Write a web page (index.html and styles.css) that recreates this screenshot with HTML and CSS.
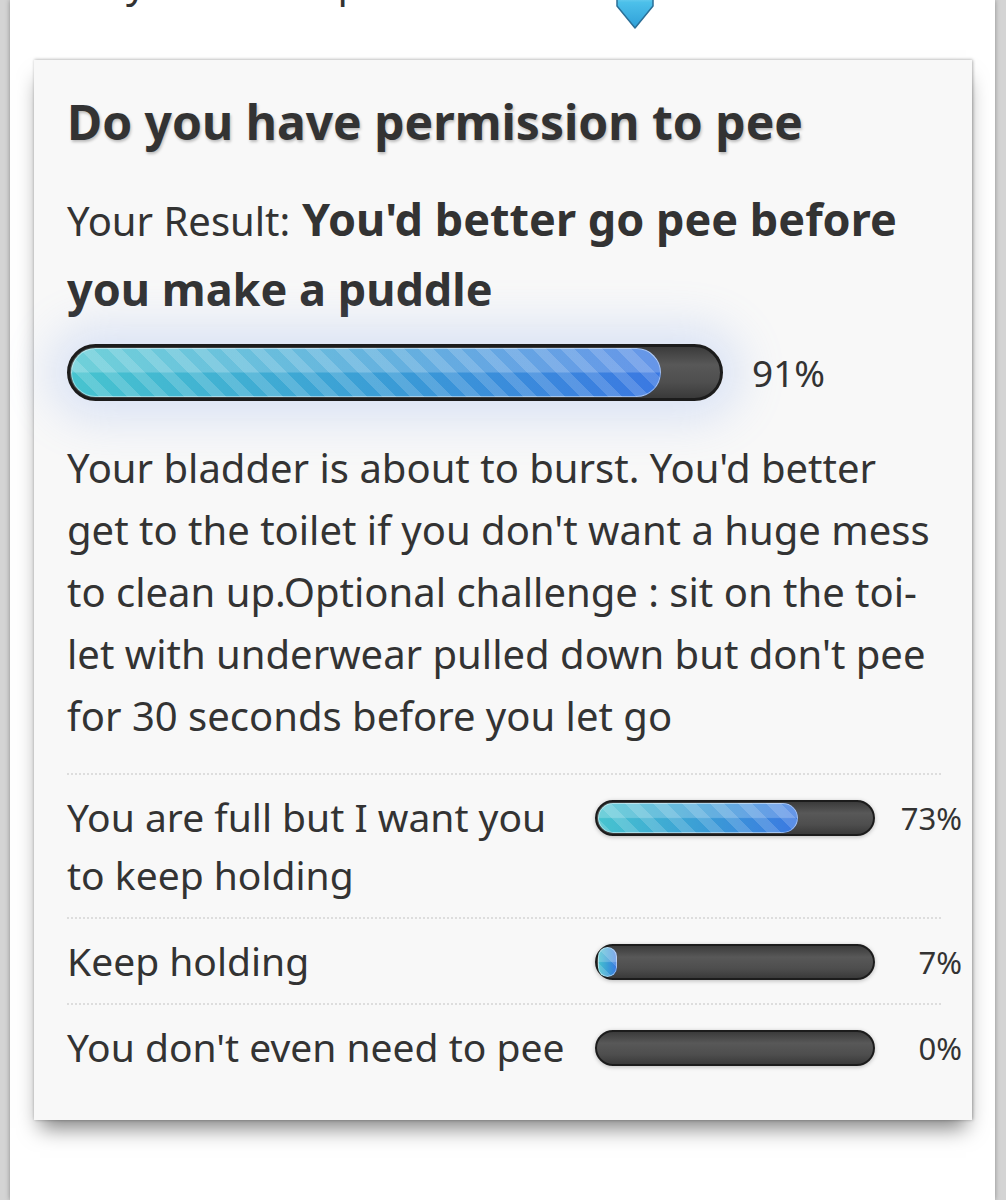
FILE: index.html
```html
<!DOCTYPE html>
<html lang="en">
<head>
    <meta charset="UTF-8">
    <title>Do you have permission to pee</title>
    <meta name="viewport" content="width=device-width, initial-scale=1.0">
    <link rel="stylesheet" href="styles.css">
</head>
<body>
    <div class="page">
        <div class="intro">
            <span class="intro-text">you stack up to the rest</span>
            <svg class="intro-arrow" width="44" height="32" viewBox="0 0 44 32">
                <defs>
                    <linearGradient id="arrowGrad" x1="0" y1="0" x2="0" y2="1">
                        <stop offset="0" stop-color="#8ddcf4"/>
                        <stop offset="0.25" stop-color="#4cc0ea"/>
                        <stop offset="1" stop-color="#2f9fd8"/>
                    </linearGradient>
                </defs>
                <path d="M4 -4 L4 8 L22 30 L40 8 L40 -4 Z" fill="url(#arrowGrad)" stroke="#2b6f97" stroke-width="1.5" stroke-linejoin="round"/>
            </svg>
        </div>

        <div class="card">
            <h1 class="quiz-title">Do you have permission to pee</h1>
            <p class="result"><span class="result-label">Your Result:</span> <strong>You'd better go pee before you make a puddle</strong></p>

            <div class="main-score">
                <div class="bar bar-main"><div class="fill" style="width:91%"></div></div>
                <span class="pct-main">91%</span>
            </div>

            <p class="desc">Your bladder is about to burst. You'd better get to the toilet if you don't want a huge mess to clean up.Optional challenge : sit on the toi&shy;let with underwear pulled down but don't pee for 30 seconds before you let go</p>

            <ul class="others">
                <li class="other">
                    <span class="other-label">You are full but I want you to keep holding</span>
                    <div class="bar bar-small"><div class="fill" style="width:73%"></div></div>
                    <span class="pct">73%</span>
                </li>
                <li class="other">
                    <span class="other-label">Keep holding</span>
                    <div class="bar bar-small"><div class="fill" style="width:7%"></div></div>
                    <span class="pct">7%</span>
                </li>
                <li class="other">
                    <span class="other-label">You don't even need to pee</span>
                    <div class="bar bar-small"><div class="fill" style="width:0%"></div></div>
                    <span class="pct">0%</span>
                </li>
            </ul>
        </div>
    </div>
</body>
</html>
```

FILE: styles.css
```css
html, body {
    margin: 0;
    padding: 0;
}
body {
    font-family: "Noto Sans", Arial, sans-serif;
    color: #333;
    background: #d4d4d4;
}
.page {
    margin: 0 11px 0 10px;
    min-height: 1200px;
    background: #fff;
    box-shadow: 0 0 5px rgba(0,0,0,0.35);
    padding: 0 23px 0 24px;
    overflow: hidden;
}
.intro {
    height: 60px;
    display: flex;
    align-items: flex-start;
}
.intro-text {
    display: block;
    box-sizing: border-box;
    width: 579px;
    margin-top: -43px;
    padding-left: 92px;
    font-size: 40px;
    line-height: 50px;
    white-space: nowrap;
    overflow: hidden;
}
.intro-arrow {
    display: block;
    margin-top: -2px;
}
.card {
    background: #f8f8f8;
    box-shadow: 0 14px 20px -6px rgba(0,0,0,0.5), 1px 0 3px rgba(0,0,0,0.25), 0 -1px 3px rgba(0,0,0,0.1);
    padding: 24px 12px 31px 33px;
}
.quiz-title {
    margin: 0;
    font-size: 48px;
    line-height: 76px;
    font-weight: 700;
    color: #333;
    text-shadow: 1px 2px 3px rgba(0,0,0,0.25);
}
.result {
    margin: 25px 0 0;
    width: 860px;
    font-size: 45px;
    line-height: 68px;
}
.result-label {
    font-size: 40px;
}
.result strong {
    font-weight: 700;
}
.main-score {
    display: flex;
    align-items: center;
    margin-top: 21px;
}
.bar {
    box-sizing: border-box;
    border: 3px solid #1c1c1c;
    border-radius: 40px;
    padding: 1px;
    background: linear-gradient(#3b3b3b, #585858 35%, #4e4e4e 70%, #3a3a3a);
}
.bar-main {
    width: 656px;
    height: 57px;
    box-shadow: 0 0 46px 18px rgba(120,160,235,0.24);
}
.pct-main {
    margin-left: 29px;
    font-size: 37px;
}
.fill {
    height: 100%;
    border-radius: 40px;
    box-shadow: inset 0 0 0 1px rgba(255,255,255,0.45);
    background:
        linear-gradient(rgba(255,255,255,0.22) 0 48%, rgba(255,255,255,0) 52%),
        repeating-linear-gradient(45deg, rgba(255,255,255,0.16) 0 10px, rgba(255,255,255,0) 10px 20px),
        linear-gradient(to right, #47c4cf, #3a9bd6 55%, #3b78e2);
}
.desc {
    margin: 36px 0 0;
    width: 880px;
    font-size: 40px;
    line-height: 62px;
    hyphens: manual;
}
.others {
    list-style: none;
    margin: 26px 0 0;
    padding: 0;
    border-top: 2px dotted #ddd;
    width: 874px;
}
.other {
    display: grid;
    grid-template-columns: 509px 280px 68px;
    column-gap: 19px;
    align-items: start;
    padding: 13px 0;
    border-bottom: 2px dotted #ddd;
}
.other:last-child {
    border-bottom: none;
}
.other-label {
    font-size: 39px;
    line-height: 58px;
}
.bar-small {
    height: 36px;
    margin-top: 12px;
    border-width: 2px;
    padding: 1px;
    box-shadow: 0 1px 4px rgba(0,0,0,0.25);
}
.pct {
    margin-top: 12px;
    font-size: 31px;
    line-height: 36px;
    text-align: right;
}
```
